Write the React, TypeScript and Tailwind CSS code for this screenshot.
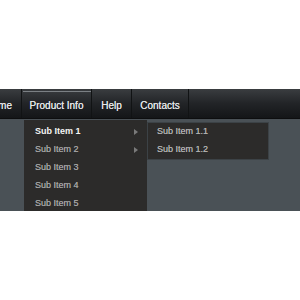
import React from "react";

const font = { fontFamily: '"Liberation Sans", Arial, sans-serif' };

function Arrow() {
  return (
    <svg width="4" height="6" viewBox="0 0 4 6" className="absolute right-[9px] top-[6px]">
      <path d="M0 0 L4 3 L0 6 Z" fill="#7a7a7a" />
    </svg>
  );
}

export default function App() {
  const navItems = [
    { label: "Home", cls: "w-[37px] justify-end pr-[9px]" },
    { label: "Product Info", cls: "w-[70px] justify-center", active: true },
    { label: "Help", cls: "w-[40px] justify-center" },
    { label: "Contacts", cls: "w-[57px] justify-center" },
  ];
  return (
    <div className="w-[300px] h-[300px] bg-white overflow-hidden" style={font}>
      <div className="h-[89px]" />
      <div className="relative h-[122px] bg-[#4a5156] overflow-hidden">
        <div className="flex h-[30px] bg-gradient-to-b from-[#3a3d40] via-[#222427] to-[#141618] border-b border-[#0d0e0f] -ml-[15px]">
          {navItems.map((it, i) => (
            <div
              key={i}
              className={`relative flex items-center pt-[3px] h-full text-[10px] text-[#e2e4e6] border-r border-[#111314] ${it.cls}`}
            >
              {it.active && <div className="absolute left-[1px] right-0 top-[2px] h-[1px] bg-[#7b8084]" />}
              <span className="relative [text-shadow:0_0_0.4px_#e2e4e6]">{it.label}</span>
            </div>
          ))}
        </div>
        <div className="absolute left-[24px] top-[31px] w-[123px] h-[100px] bg-[#2c2b2a] pt-[3px]">
          {["Sub Item 1", "Sub Item 2", "Sub Item 3", "Sub Item 4", "Sub Item 5"].map((s, i) => (
            <div
              key={s}
              className={`relative h-[18px] flex items-center pl-[11px] text-[9px] ${i === 0 ? "font-bold text-[#f4f4f4]" : "text-[#a2a2a2] [text-shadow:0_0_0.4px_#a2a2a2]"}`}
            >
              {s}
              {i < 2 && <Arrow />}
            </div>
          ))}
        </div>
        <div className="absolute left-[147px] top-[33px] w-[122px] h-[38px] bg-[#2c2b2a] border border-[#3c4246]">
          {["Sub Item 1.1", "Sub Item 1.2"].map((s) => (
            <div key={s} className="h-[18px] flex items-center pl-[9px] text-[9px] text-[#b0b0b0] [text-shadow:0_0_0.4px_#b0b0b0]">
              {s}
            </div>
          ))}
        </div>
      </div>
    </div>
  );
}
